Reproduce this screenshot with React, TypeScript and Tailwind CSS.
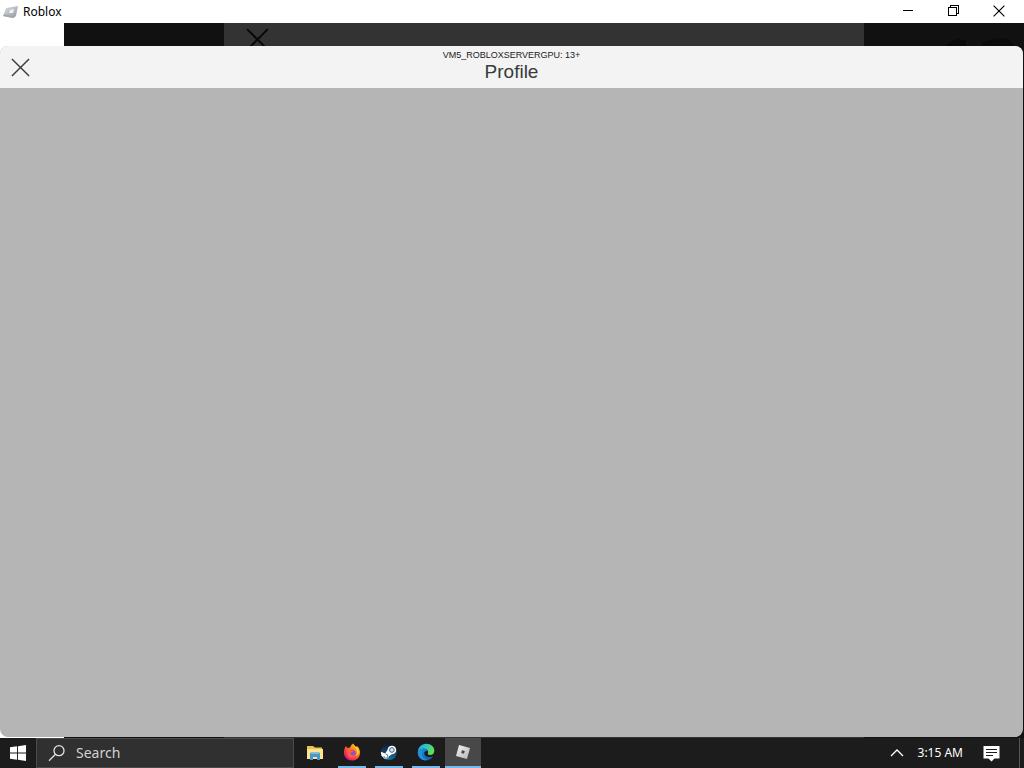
import type { ReactNode } from "react";

function RobloxMark({ className }: { className: string }) {
  return (
    <svg viewBox="0 0 16 16" className={className} aria-hidden="true">
      <defs>
        <linearGradient id="mark" x1="0" y1="0" x2="1" y2="1">
          <stop offset="0" stopColor="#f6f6f6" />
          <stop offset="1" stopColor="#b4b4b6" />
        </linearGradient>
      </defs>
      <path d="M4 1 15 4 12 15 1 12Z" fill="url(#mark)" />
      <path d="M7 6.2 9.8 7 9 9.8 6.2 9Z" fill="#454545" />
    </svg>
  );
}

function TitleMark() {
  return (
    <svg viewBox="0 0 16 16" className="h-4 w-4" aria-hidden="true">
      <defs>
        <linearGradient id="title-mark" x1="0" y1="0" x2="1" y2="1">
          <stop offset="0" stopColor="#dfe2e7" />
          <stop offset="1" stopColor="#92979f" />
        </linearGradient>
      </defs>
      <path d="M3 4 15 2 13 12 10 14 0 12Z" fill="url(#title-mark)" />
      <path d="M1 10.5 10 12 13 10 12 13 10 14 0 12Z" fill="#a2a6ad" />
      <path d="M7 6 11 5 10 9 6 9Z" fill="#f1f2f4" />
    </svg>
  );
}

function Cross({ className, color, width }: { className: string; color: string; width: number }) {
  return (
    <svg viewBox="0 0 20 20" className={className} fill="none" stroke={color} strokeWidth={width} aria-hidden="true">
      <path d="M1 1 19 19M19 1 1 19" />
    </svg>
  );
}

function TitleBar() {
  return (
    <header className="flex h-[23px] shrink-0 items-center justify-between bg-white">
      <div className="flex items-center gap-1 pl-[3px]">
        <TitleMark />
        <span className="text-[12px] leading-4 text-black">Roblox</span>
      </div>
      <div className="flex h-full pb-[2px] pr-[2px]">
        <button aria-label="Minimize" className="flex w-[45px] items-center justify-center">
          <svg viewBox="0 0 11 11" className="h-[11px] w-[11px]" stroke="#000" shapeRendering="crispEdges">
            <path d="M0 5.5H10" />
          </svg>
        </button>
        <button aria-label="Restore" className="flex w-[45px] items-center justify-center">
          <svg viewBox="0 0 11 11" className="h-[11px] w-[11px]" fill="none" stroke="#000" shapeRendering="crispEdges">
            <path d="M.5 2.5H8.5V10.5H.5ZM2.5 2.5V.5H10.5V8.5H8.5" />
          </svg>
        </button>
        <button aria-label="Close window" className="flex w-[46px] items-center justify-center">
          <Cross className="h-[12px] w-[12px]" color="#000" width={1.9} />
        </button>
      </div>
    </header>
  );
}

function Backdrop() {
  return (
    <div className="col-start-1 row-start-1 flex" aria-hidden="true">
      <div className="w-16 bg-white" />
      <div className="flex flex-1 justify-between bg-[#111111]">
        <div className="w-40" />
        <div className="flex-1 bg-[#333333] pl-[22px] pt-[5px]">
          <Cross className="h-[23px] w-[23px]" color="#080808" width={1.7} />
        </div>
        <div className="flex w-40 justify-end gap-3 pr-2 pt-[15px]">
          <svg viewBox="0 0 24 10" className="h-[10px] w-6">
            <path d="M0 8Q3 4 8 2 14 0 20 3V9H0Z" fill="#090909" />
          </svg>
          <svg viewBox="0 0 34 10" className="h-[10px] w-[34px]">
            <path d="M0 8V4L12 1 26 0 32 8Z" fill="#0b0b0b" />
          </svg>
        </div>
      </div>
    </div>
  );
}

function ProfilePanel() {
  return (
    <main className="col-start-1 row-start-1 mb-px mr-px mt-[23px] flex flex-col overflow-hidden rounded-lg bg-[#b5b5b5]">
      <div className="grid h-[42px] grid-cols-[1fr_auto_1fr] bg-[#f3f3f3]">
        <button aria-label="Close profile" className="ml-[11px] flex w-5 items-center">
          <Cross className="h-[19px] w-[19px]" color="#393b3d" width={1.5} />
        </button>
        <div className="flex flex-col items-center pt-[3px] font-['Liberation_Sans',sans-serif] text-[#393b3d]">
          <p className="text-[9px] leading-3 text-[#222222]">VM5_ROBLOXSERVERGPU: 13+</p>
          <h1 className="text-[19px] leading-[22px]">Profile</h1>
        </div>
      </div>
      <div className="flex-1" />
    </main>
  );
}

function TaskButton({ label, state, children }: { label: string; state: "idle" | "running" | "active"; children: ReactNode }) {
  return (
    <button
      aria-label={label}
      className={`flex h-full flex-col items-center ${state === "active" ? "ml-px w-9 bg-[#484848]" : "w-[37px]"}`}
    >
      <span className="flex flex-1 items-center">{children}</span>
      <span
        className={`h-[2px] ${state === "idle" ? "w-0" : state === "active" ? "w-full bg-[#76b9ed]" : "w-7 bg-[#76b9ed]"}`}
      />
    </button>
  );
}

function FolderIcon() {
  return (
    <svg viewBox="0 0 18 18" className="h-[18px] w-[18px]" aria-hidden="true">
      <path d="M1 3H7L9 4.5H16V8H1Z" fill="#ecc04f" />
      <path d="M1 6H17V16H1Z" fill="#ffe391" />
      <path d="M4 10.5Q4 9.5 5 9.5H13Q14 9.5 14 10.5V17H11V14H7V17H4Z" fill="#4a98c9" />
      <path d="M5 9.5H13V11H5Z" fill="#7bbbdc" />
    </svg>
  );
}

function FirefoxIcon() {
  return (
    <svg viewBox="0 0 18 18" className="h-[18px] w-[18px]" aria-hidden="true">
      <defs>
        <linearGradient id="fox" x1="1" y1="0" x2="0.2" y2="1">
          <stop offset="0" stopColor="#fff44f" />
          <stop offset="0.35" stopColor="#ff980e" />
          <stop offset="0.7" stopColor="#ff3647" />
          <stop offset="1" stopColor="#e31587" />
        </linearGradient>
      </defs>
      <path d="M3 3 4.3 5 7 4.6Q8 1.7 10.3.5 10.5 2.4 13 4L14 3Q17.3 6 17 10.5C16.5 15 13 17.5 9 17.5 4.5 17.5 1.2 14.2 1 10 .9 7 1.6 4.8 3 3Z" fill="url(#fox)" />
      <circle cx="9.3" cy="10.3" r="3.4" fill="#9151c4" />
      <path d="M3.3 7.2Q6 5.8 8.5 7.7L10.5 8Q9.7 9.5 7.5 9.5 7 12 10 12.6 12.2 12.4 13 11 12.6 15 8.6 15 4.2 14.7 3.3 7.2Z" fill="#ff5f40" />
      <path d="M10.3.5C10 3 13.5 4.5 14 8.5 14.2 10.5 13.5 12 12.5 13 16 12 16.5 8.5 14.8 5.8 13 3.7 11 3 10.3.5Z" fill="#ffd23d" />
    </svg>
  );
}

function SteamIcon() {
  return (
    <svg viewBox="0 0 18 18" className="h-[18px] w-[18px]" aria-hidden="true">
      <defs>
        <linearGradient id="steam" x1="0" y1="0" x2="0" y2="1">
          <stop offset="0" stopColor="#101a35" />
          <stop offset="1" stopColor="#176f9e" />
        </linearGradient>
      </defs>
      <circle cx="9" cy="9" r="8" fill="url(#steam)" />
      <path d="M.8 8.8 5.2 10.4 7.6 6.8A4.3 4.3 0 1 1 11.8 11.3L9 13.3A3.2 3.2 0 0 1 3 14.3L1.4 12.8Z" fill="#fff" />
      <circle cx="11.9" cy="7" r="2.3" fill="#dbe7f1" stroke="#3c5878" />
      <path d="M3.9 13A2 2 0 1 0 5.7 11.2" fill="none" stroke="#3f7ba3" />
    </svg>
  );
}

function EdgeIcon() {
  return (
    <svg viewBox="0 0 18 18" className="h-[18px] w-[18px]" aria-hidden="true">
      <defs>
        <linearGradient id="edge-top" x1="0" y1="0" x2="1" y2="0.4">
          <stop offset="0" stopColor="#229fe0" />
          <stop offset="0.5" stopColor="#30c5c8" />
          <stop offset="1" stopColor="#66dc51" />
        </linearGradient>
        <linearGradient id="edge-low" x1="0" y1="0" x2="0.7" y2="1">
          <stop offset="0" stopColor="#1a91df" />
          <stop offset="1" stopColor="#1262b0" />
        </linearGradient>
      </defs>
      <path d="M.8 9.5C.7 4.5 4.4.8 9.2.8 14 .8 17.3 4 17.3 7.7 17.3 10.4 15.5 12 13.2 12 11.3 12 10.3 11.3 10.9 10.3 12.2 8 9.8 5.7 6.8 5.7 3.6 5.7 1.5 7.2.8 9.5Z" fill="url(#edge-top)" />
      <path d="M.8 9.2C1.7 6.4 4 5.5 6.8 5.7 8.9 5.9 10.2 7 10.5 8.2 8.5 7.5 7 9 7.2 10.8 7.6 13.6 11.8 15.3 16 13.3 14.6 15.8 12 17.3 9 17.3 4 17.3.8 13.7.8 9.2Z" fill="url(#edge-low)" />
      <path d="M6.6 5.7C4.8 7.5 4.3 10 5.2 12.5 6 15 8.5 16.8 10.8 17.1 5 18.5.8 14 .8 9.5 1.8 7 4 5.7 6.6 5.7Z" fill="#2091df" />
    </svg>
  );
}

function Taskbar() {
  return (
    <footer className="flex h-[30px] shrink-0 items-stretch bg-[#1c1c1c]">
      <button aria-label="Start" className="flex w-9 items-center justify-center">
        <svg viewBox="0 0 17 17" className="h-4 w-4" fill="#fff" aria-hidden="true">
          <path d="M0 2.5 7.5 1.4V8H0ZM8.5 1.2 17 0V8H8.5ZM0 9H7.5V15.6L0 14.5ZM8.5 9H17V17L8.5 15.8Z" />
        </svg>
      </button>
      <label className="flex w-[258px] items-center border border-[#4c4c4c] bg-[#303030] pl-[11px]">
        <svg viewBox="0 0 18 18" className="h-[18px] w-[18px] shrink-0" fill="none" stroke="#e4e4e4" strokeWidth="1.3" aria-hidden="true">
          <circle cx="11" cy="6.7" r="5" />
          <path d="M7.5 10.3 1 16.8" />
        </svg>
        <input
          type="text"
          aria-label="Search"
          placeholder="Search"
          className="ml-[10px] min-w-0 flex-1 bg-transparent text-[14px] leading-5 text-[#d2d2d2] outline-none placeholder:text-[#d2d2d2]"
        />
      </label>
      <nav className="ml-[2px] flex">
        <TaskButton label="File Explorer" state="idle"><FolderIcon /></TaskButton>
        <TaskButton label="Firefox" state="running"><FirefoxIcon /></TaskButton>
        <TaskButton label="Steam" state="running"><SteamIcon /></TaskButton>
        <TaskButton label="Edge" state="running"><EdgeIcon /></TaskButton>
        <TaskButton label="Roblox" state="active"><RobloxMark className="h-4 w-4" /></TaskButton>
      </nav>
      <div className="ml-auto flex items-center">
        <button aria-label="Show hidden icons" className="flex h-full w-7 items-center justify-center">
          <svg viewBox="0 0 14 8" className="h-2 w-[14px]" fill="none" stroke="#fff" strokeWidth="1.3">
            <path d="M1 7 7 1 13 7" />
          </svg>
        </button>
        <time className="ml-[7px] text-[12px] leading-4 text-white">3:15 AM</time>
        <button aria-label="Notifications" className="ml-[14px] flex h-full w-7 items-center justify-center">
          <svg viewBox="0 0 17 17" className="h-[17px] w-[17px]" aria-hidden="true">
            <path d="M.5 1H16.5V13.5H11.5L8.5 16.5 5.5 13.5H.5Z" fill="#fff" />
            <path d="M3 4.5H14M3 7.5H14M3 10.5H10" stroke="#1c1c1c" shapeRendering="crispEdges" />
          </svg>
        </button>
        <button aria-label="Show desktop" className="ml-[14px] h-full w-[5px] border-l border-[#555555]" />
      </div>
    </footer>
  );
}

export default function App() {
  return (
    <div className="flex min-h-screen flex-col font-['Noto_Sans','Open_Sans',sans-serif]">
      <TitleBar />
      <div className="grid flex-1">
        <Backdrop />
        <ProfilePanel />
      </div>
      <Taskbar />
    </div>
  );
}
